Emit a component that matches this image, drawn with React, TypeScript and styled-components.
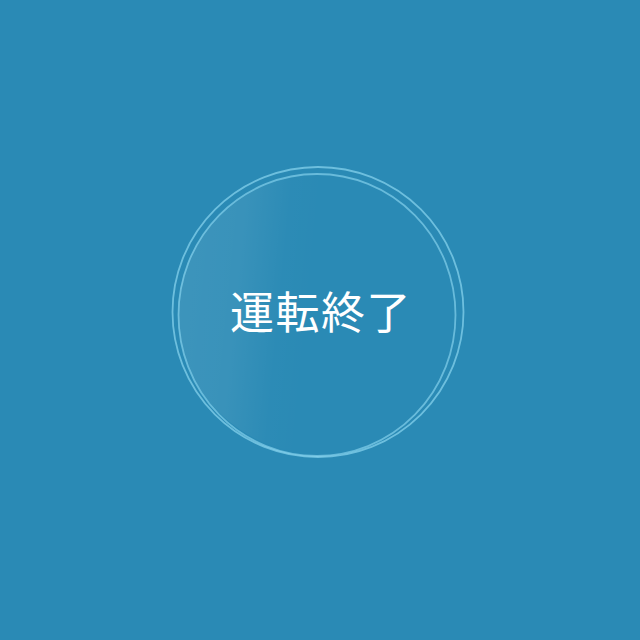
import React from "react";
import styled, { createGlobalStyle } from "styled-components";

const Global = createGlobalStyle`
  html, body { margin: 0; padding: 0; height: 100%; }
  body { background: #2a8ab5; }
  #root { height: 100%; }
`;

const Screen = styled.div`
  width: 640px;
  height: 640px;
  background: #2a8ab5;
  display: flex;
  align-items: center;
  justify-content: center;
  padding-bottom: 14px;
  padding-right: 4px;
  box-sizing: border-box;
`;

const Bubble = styled.div`
  position: relative;
  width: 300px;
  height: 300px;
  display: flex;
  align-items: center;
  justify-content: center;
`;

const Rings = styled.svg`
  position: absolute;
  inset: 0;
  width: 300px;
  height: 300px;
`;

const Label = styled.div`
  position: relative;
  color: #ffffff;
  font-family: "Noto Sans CJK JP", "Noto Sans", sans-serif;
  font-weight: 400;
  font-size: 44px;
  letter-spacing: 1.5px;
  line-height: 1;
  margin-top: -6px;
  margin-left: 6px;
`;

export default function App() {
  return (
    <>
      <Global />
      <Screen>
        <Bubble>
          <Rings viewBox="0 0 300 300">
            <defs>
              <linearGradient id="fill" x1="0" y1="0.3" x2="1" y2="0.4">
                <stop offset="0" stopColor="#ffffff" stopOpacity="0.09" />
                <stop offset="0.22" stopColor="#ffffff" stopOpacity="0.07" />
                <stop offset="0.38" stopColor="#ffffff" stopOpacity="0.01" />
                <stop offset="0.5" stopColor="#ffffff" stopOpacity="0" />
              </linearGradient>
            </defs>
            <circle cx="149" cy="151" r="139" fill="url(#fill)" />
            <ellipse cx="150" cy="149" rx="145.5" ry="145" fill="none" stroke="#8ad6f0" strokeOpacity="0.7" strokeWidth="1.8" />
            <ellipse cx="149" cy="152" rx="138.5" ry="141" fill="none" stroke="#8ad6f0" strokeOpacity="0.65" strokeWidth="1.8" />
          </Rings>
          <Label>運転終了</Label>
        </Bubble>
      </Screen>
    </>
  );
}
